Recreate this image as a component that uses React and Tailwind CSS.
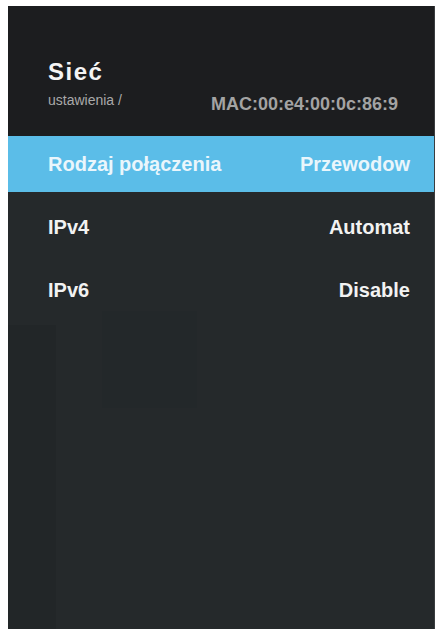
import React from 'react'

const rows = [
  { label: 'Rodzaj połączenia', value: 'Przewodow', active: true },
  { label: 'IPv4', value: 'Automat' },
  { label: 'IPv6', value: 'Disable' },
]

export default function App() {
  return (
    <div className="w-[440px] h-[632px] bg-white pt-[6px] pl-[8px] pr-[5px] pb-[3px] font-['Liberation_Sans',Arial,sans-serif]">
      <div className="h-full flex flex-col bg-[#25292b] border-r border-[#3a3d3f]">
        {/* header */}
        <div className="h-[130px] shrink-0 bg-[#1c1d1f] pt-[54px] pl-[40px] pr-[36px]">
          <h1 className="text-[24px] leading-none font-bold tracking-[1.5px] text-[#f4f4f4]">Sieć</h1>
          <div className="flex items-start justify-between mt-[9px]">
            <span className="text-[14px] text-[#a9a9a9] leading-none">ustawienia /</span>
            <span className="mt-[2px] text-[18px] font-bold text-[#a3a3a3] leading-none">MAC:00:e4:00:0c:86:9</span>
          </div>
        </div>

        {/* list */}
        <div className="flex flex-col shrink-0">
          {rows.map(r => (
            <div
              key={r.label}
              className={`h-[56px] mb-[7px] flex items-center justify-between pl-[40px] pr-[24px] text-[20px] font-bold ${r.active ? 'bg-[#5bbde8] text-[#eaf6fc]' : 'text-[#f2f2f2]'}`}
            >
              <span>{r.label}</span>
              <span>{r.value}</span>
            </div>
          ))}
        </div>

        <div className="flex-1 flex">
          <div className="w-[48px] bg-[#222628]" />
          <div className="ml-[46px] mt-[-14px] w-[95px] h-[97px] bg-[#23282a]" />
        </div>
      </div>
    </div>
  )
}
